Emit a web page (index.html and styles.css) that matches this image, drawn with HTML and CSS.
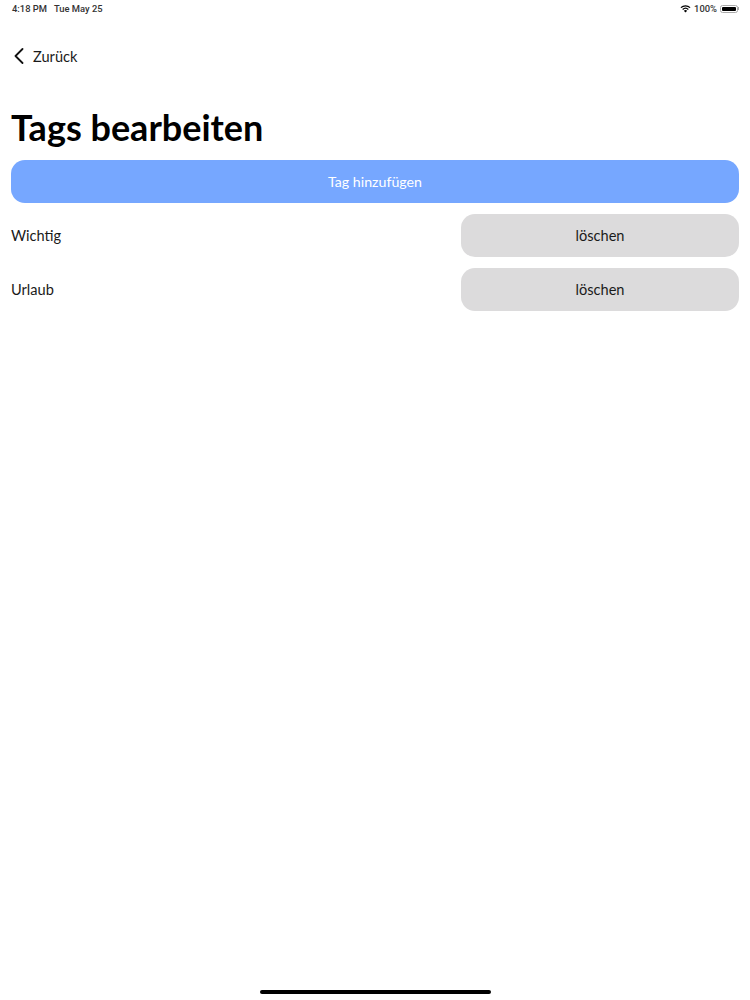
FILE: index.html
```html
<!DOCTYPE html>
<html lang="en">
<head>
    <meta charset="UTF-8">
    <meta name="viewport" content="width=device-width, initial-scale=1.0">
    <title>Tags bearbeiten</title>
    <link rel="stylesheet" href="styles.css">
</head>
<body>
    <div class="statusbar">
        <div class="status-left">
            <span>4:18 PM</span>
            <span>Tue May 25</span>
        </div>
        <div class="status-right">
            <svg class="wifi" width="11" height="9" viewBox="0 0 12 9">
                <path d="M6 8.8 L4.2 6.9 A2.6 2.6 0 0 1 7.8 6.9 Z" fill="#000"/>
                <path d="M2.9 5.6 A4.5 4.5 0 0 1 9.1 5.6" fill="none" stroke="#000" stroke-width="1.3"/>
                <path d="M1 3.6 A7.2 7.2 0 0 1 11 3.6" fill="none" stroke="#000" stroke-width="1.3"/>
            </svg>
            <span>100%</span>
            <div class="battery"><div class="battery-fill"></div></div>
            <div class="battery-tip"></div>
        </div>
    </div>

    <div class="nav">
        <svg class="back-icon" width="10" height="16" viewBox="0 0 10 16">
            <path d="M8.5 1 L1.5 8 L8.5 15" fill="none" stroke="#111" stroke-width="1.8" stroke-linecap="round" stroke-linejoin="round"/>
        </svg>
        <span>Zurück</span>
    </div>

    <div class="content">
        <h1 class="title">Tags bearbeiten</h1>
        <div class="btn btn-add">Tag hinzufügen</div>
        <div class="tag-row">
            <span>Wichtig</span>
            <div class="btn btn-delete">löschen</div>
        </div>
        <div class="tag-row">
            <span>Urlaub</span>
            <div class="btn btn-delete">löschen</div>
        </div>
    </div>

    <div class="home-indicator"></div>
</body>
</html>
```

FILE: styles.css
```css
body {
    margin: 0;
    height: 1000px;
    background-color: #fff;
    color: #1a1a1a;
    font-family: Lato, sans-serif;
    font-size: 14.6px;
    overflow: hidden;
}
.statusbar {
    display: flex;
    justify-content: space-between;
    align-items: center;
    height: 17px;
    padding: 0 11px 1px 12px;
    font-family: Roboto, sans-serif;
    font-size: 9.4px;
    font-weight: 500;
    color: #333;
}
.status-left {
    display: flex;
    gap: 7px;
}
.status-right {
    display: flex;
    align-items: center;
    gap: 3px;
}
.battery {
    width: 18px;
    height: 8px;
    padding: 1px;
    border: 1px solid #aaa;
    border-radius: 2.5px;
    box-sizing: border-box;
    display: flex;
}
.battery-fill {
    flex: 1;
    background-color: #000;
    border-radius: 1px;
}
.battery-tip {
    width: 1px;
    height: 3px;
    margin-left: -3px;
    background-color: #aaa;
}
.nav {
    display: flex;
    align-items: center;
    gap: 9px;
    height: 20px;
    margin-top: 28px;
    padding-left: 14px;
}
.content {
    padding: 0 11px;
}
.title {
    margin: 40px 0 11px;
    height: 43px;
    line-height: 43px;
    font-size: 36px;
    font-weight: 700;
    color: #000;
}
.btn {
    display: flex;
    justify-content: center;
    align-items: center;
    height: 43px;
    border-radius: 14px;
}
.btn-add {
    background-color: #76a7ff;
    color: #fff;
    font-size: 14.2px;
}
.tag-row {
    display: flex;
    justify-content: space-between;
    align-items: center;
    margin-top: 11px;
}
.btn-delete {
    width: 278px;
    background-color: #dcdbdc;
}
.home-indicator {
    position: absolute;
    left: 260px;
    top: 990px;
    width: 231px;
    height: 4px;
    border-radius: 2px;
    background-color: #000;
}
```
